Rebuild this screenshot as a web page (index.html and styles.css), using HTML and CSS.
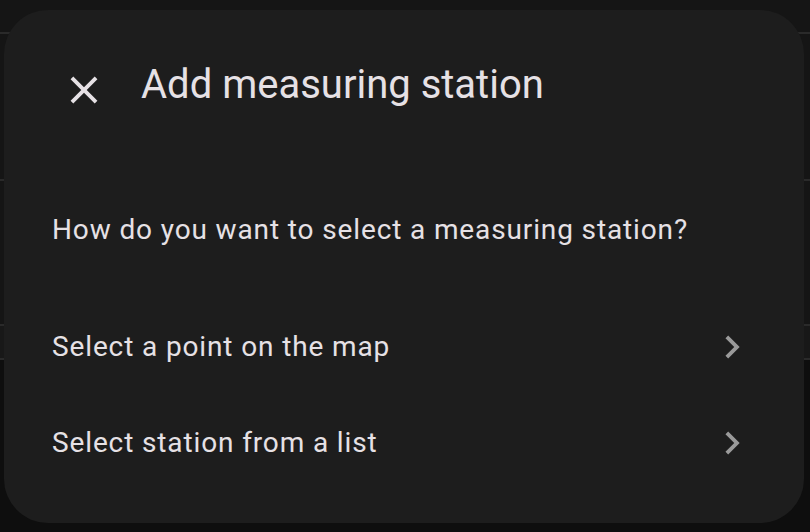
FILE: index.html
```html
<!DOCTYPE html>
<html lang="en">
<head>
<meta charset="utf-8">
<link rel="stylesheet" href="styles.css">
</head>
<body>
<div class="backdrop">
  <div class="bg-row r1"></div>
  <div class="bg-line"></div>
  <div class="bg-row r2"></div>
  <div class="bg-line"></div>
  <div class="bg-row r3"></div>
  <div class="bg-line"></div>
  <div class="bg-row r4"></div>
  <div class="bg-line"></div>
  <div class="bg-row r5"></div>
</div>
<div class="dialog">
  <div class="header">
    <svg class="close" viewBox="0 0 24 24" width="46" height="46"><path fill="#e6e1e5" d="M19 6.41 17.59 5 12 10.59 6.41 5 5 6.41 10.59 12 5 17.59 6.41 19 12 13.41 17.59 19 19 17.59 13.41 12z"/></svg>
    <h1 class="title">Add measuring station</h1>
  </div>
  <p class="question">How do you want to select a measuring station?</p>
  <div class="options">
    <div class="option">
      <span class="label">Select a point on the map</span>
      <svg class="chev" viewBox="0 0 24 24" width="46" height="46"><path fill="#9a9a9a" d="M10 6 8.59 7.41 13.17 12l-4.58 4.59L10 18l6-6z"/></svg>
    </div>
    <div class="option">
      <span class="label">Select station from a list</span>
      <svg class="chev" viewBox="0 0 24 24" width="46" height="46"><path fill="#9a9a9a" d="M10 6 8.59 7.41 13.17 12l-4.58 4.59L10 18l6-6z"/></svg>
    </div>
  </div>
</div>
</body>
</html>
```
FILE: styles.css
```css
html, body {
  margin: 0;
  padding: 0;
  width: 810px;
  height: 532px;
  overflow: hidden;
  background: #0e0e0e;
  font-family: Roboto, "Noto Sans", sans-serif;
}
.backdrop {
  display: flex;
  flex-direction: column;
}
.bg-row { background: #151515; }
.r1 { height: 32px; }
.r2 { height: 145px; }
.r3 { height: 143px; }
.r4 { height: 32px; background: #181818; }
.r5 { height: 170px; background: #0e0e0e; }
.bg-line { height: 2px; background: #2a2a2a; }
.dialog {
  position: absolute;
  left: 4px;
  top: 10px;
  width: 800px;
  height: 513px;
  box-sizing: border-box;
  background: #1d1d1d;
  border-radius: 44px;
  padding: 57px 48px 0 48px;
  color: #e6e1e5;
}
.header {
  display: flex;
  align-items: flex-start;
  gap: 34px;
  padding-left: 9px;
  height: 46px;
}
.close { display: block; flex: none; }
.title {
  margin: -2px 0 0 0;
  font-size: 40px;
  font-weight: 400;
  line-height: 40px;
  color: #e6e1e5;
}
.question {
  margin: 99px 0 0 0;
  font-size: 28px;
  line-height: 36px;
  letter-spacing: 0.87px;
  color: #e6e1e5;
}
.options {
  margin-top: 76px;
  display: flex;
  flex-direction: column;
  gap: 50px;
}
.option {
  display: flex;
  align-items: center;
  justify-content: space-between;
  height: 46px;
  padding-right: 1px;
}
.label {
  font-size: 28px;
  line-height: 36px;
  letter-spacing: 0.87px;
  color: #e6e1e5;
}
.chev { display: block; }
```
